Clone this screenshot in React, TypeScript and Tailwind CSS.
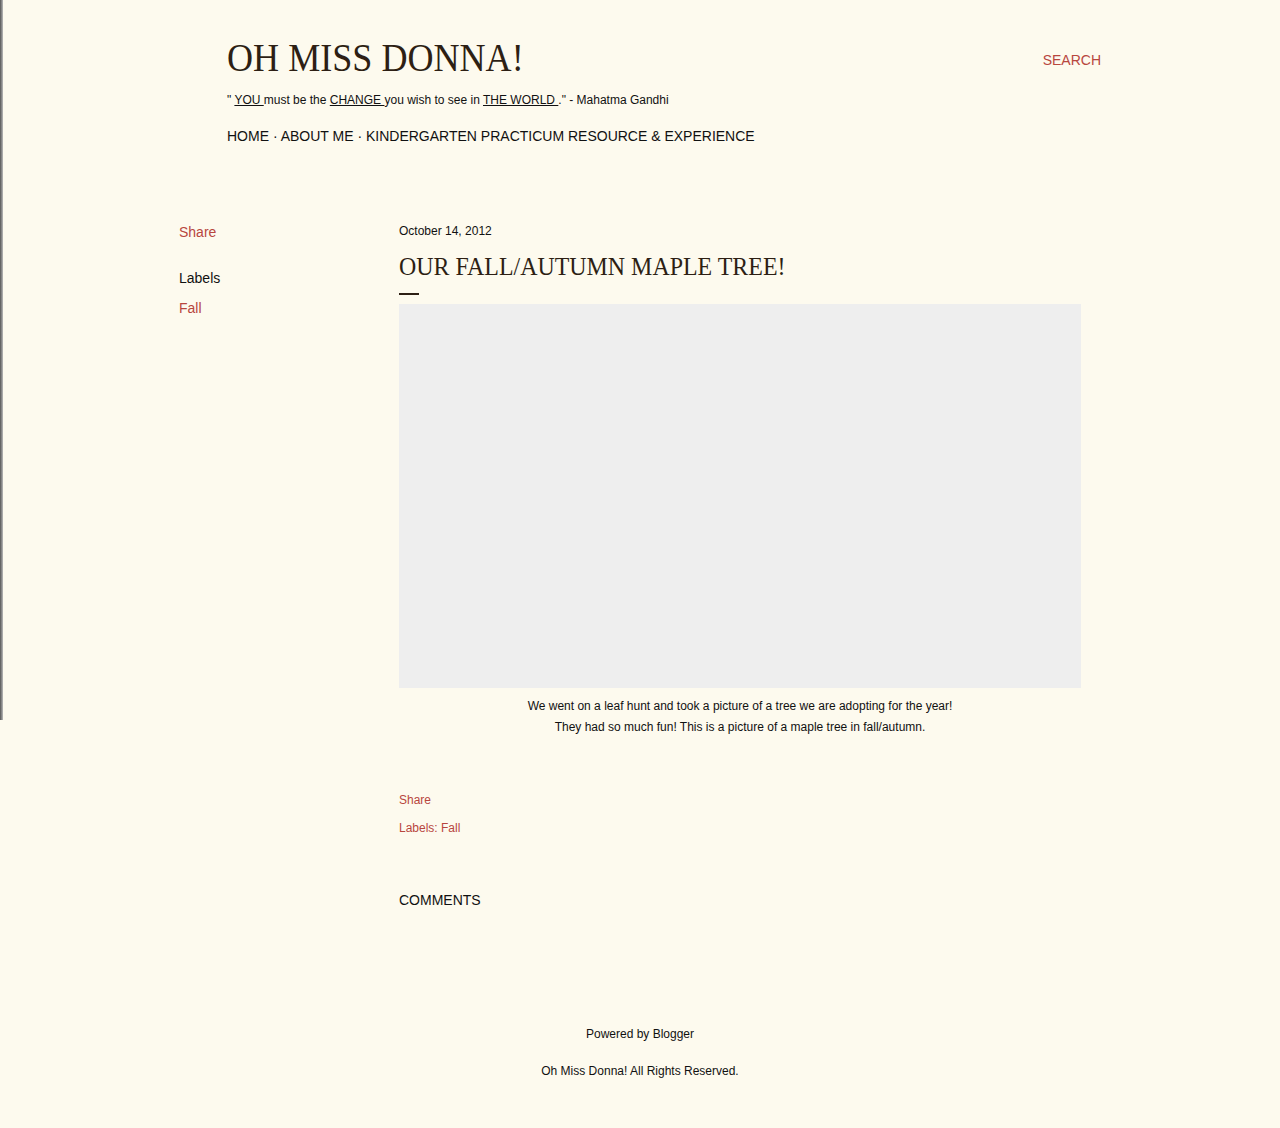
import React from "react";

const red = "text-[#b8463e]";

export default function App() {
  return (
    <div className="relative min-h-[1128px] bg-[#fdfaee] font-['Liberation_Sans',Arial,sans-serif] text-[#111]">
      <div className="absolute left-0 top-0 h-[720px] w-[3px] bg-gradient-to-r from-[#555] to-[#bbb]" />
      <div className="mx-auto w-[922px]">
        <header className="pl-[48px] pt-[36px]">
          <div className="flex items-start justify-between">
            <h1 className="origin-left scale-x-[0.88] whitespace-nowrap font-['Liberation_Serif',serif] text-[41px] leading-[42px] text-[#2d1f14]">
              OH MISS DONNA!
            </h1>
            <a className={`mt-[14px] text-[14px] ${red}`}>SEARCH</a>
          </div>
          <p className="mt-[14px] text-[12px] leading-[16px]">
            " <span className="underline">YOU </span>must be the <span className="underline">CHANGE </span>you wish to see in <span className="underline">THE WORLD </span>." - Mahatma Gandhi
          </p>
          <nav className="mt-[19px] text-[14px] leading-[18px]">
            HOME · ABOUT ME · KINDERGARTEN PRACTICUM RESOURCE &amp; EXPERIENCE
          </nav>
        </header>
        <div className="mt-[78px] flex">
          <aside className="w-[220px] shrink-0">
            <div className={`text-[14px] leading-[18px] ${red}`}>Share</div>
            <div className="mt-[28px] text-[14px] leading-[18px]">Labels</div>
            <div className={`mt-[12px] text-[14px] leading-[18px] ${red}`}>Fall</div>
          </aside>
          <main className="w-[682px]">
            <div className="text-[12px] leading-[16px]">October 14, 2012</div>
            <h2 className="mt-[14px] origin-left scale-x-[0.92] whitespace-nowrap font-['Liberation_Serif',serif] text-[26px] leading-[28px] text-[#2d1f14]">
              OUR FALL/AUTUMN MAPLE TREE!
            </h2>
            <div className="mt-[12px] h-[2px] w-[20px] bg-[#2d1f14]" />
            <div className="mt-[9px] h-[384px] w-full bg-[#eeeeee]" />
            <div className="mt-[8px] text-center text-[12px] leading-[21px]">
              <div>We went on a leaf hunt and took a picture of a tree we are adopting for the year!</div>
              <div>They had so much fun! This is a picture of a maple tree in fall/autumn.</div>
            </div>
            <div className={`mt-[54px] text-[12px] leading-[16px] ${red}`}>Share</div>
            <div className={`mt-[12px] text-[12px] leading-[16px] ${red}`}>Labels: Fall</div>
            <div className="mt-[55px] text-[14px] leading-[18px]">COMMENTS</div>
          </main>
        </div>
      </div>
      <footer className="mt-[117px] pb-[40px] text-center text-[12px] leading-[16px]">
        <div>Powered by Blogger</div>
        <div className="mt-[21px]">Oh Miss Donna! All Rights Reserved.</div>
      </footer>
    </div>
  );
}
